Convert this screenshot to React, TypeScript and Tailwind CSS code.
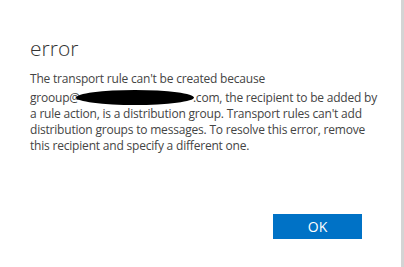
export default function App() {
  return (
    <div className="flex h-[267px] w-[404px] bg-white" style={{ fontFamily: '"Open Sans", "Segoe UI", sans-serif' }}>
      <div className="flex flex-1 flex-col pl-[30px] pr-[16px] pt-[34px]">
        {/* Title */}
        <h1 className="text-[21px] font-light leading-[28px] text-[#333333]">error</h1>

        {/* Message */}
        <p className="mt-[9px] whitespace-nowrap text-[12px] tracking-[-0.2px] leading-[16px] text-[#444444]">
          The transport rule can't be created because
          <br />
          grooup@
          <span className="-ml-[4px] -mr-[1px] inline-block h-[15px] w-[118px] translate-y-[3px] rounded-[50%] bg-black align-baseline" />
          .com, the recipient to be added by
          <br />
          a rule action, is a distribution group. Transport rules can't add
          <br />
          distribution groups to messages. To resolve this error, remove
          <br />
          this recipient and specify a different one.
        </p>

        {/* Actions */}
        <div className="mt-auto mb-[28px] flex justify-end pr-[23px]">
          <button className="h-[25px] w-[89px] bg-[#0072c6] text-[14px] text-white">OK</button>
        </div>
      </div>
      <div className="w-[3px] bg-[#d4d4d4]" />
    </div>
  );
}
